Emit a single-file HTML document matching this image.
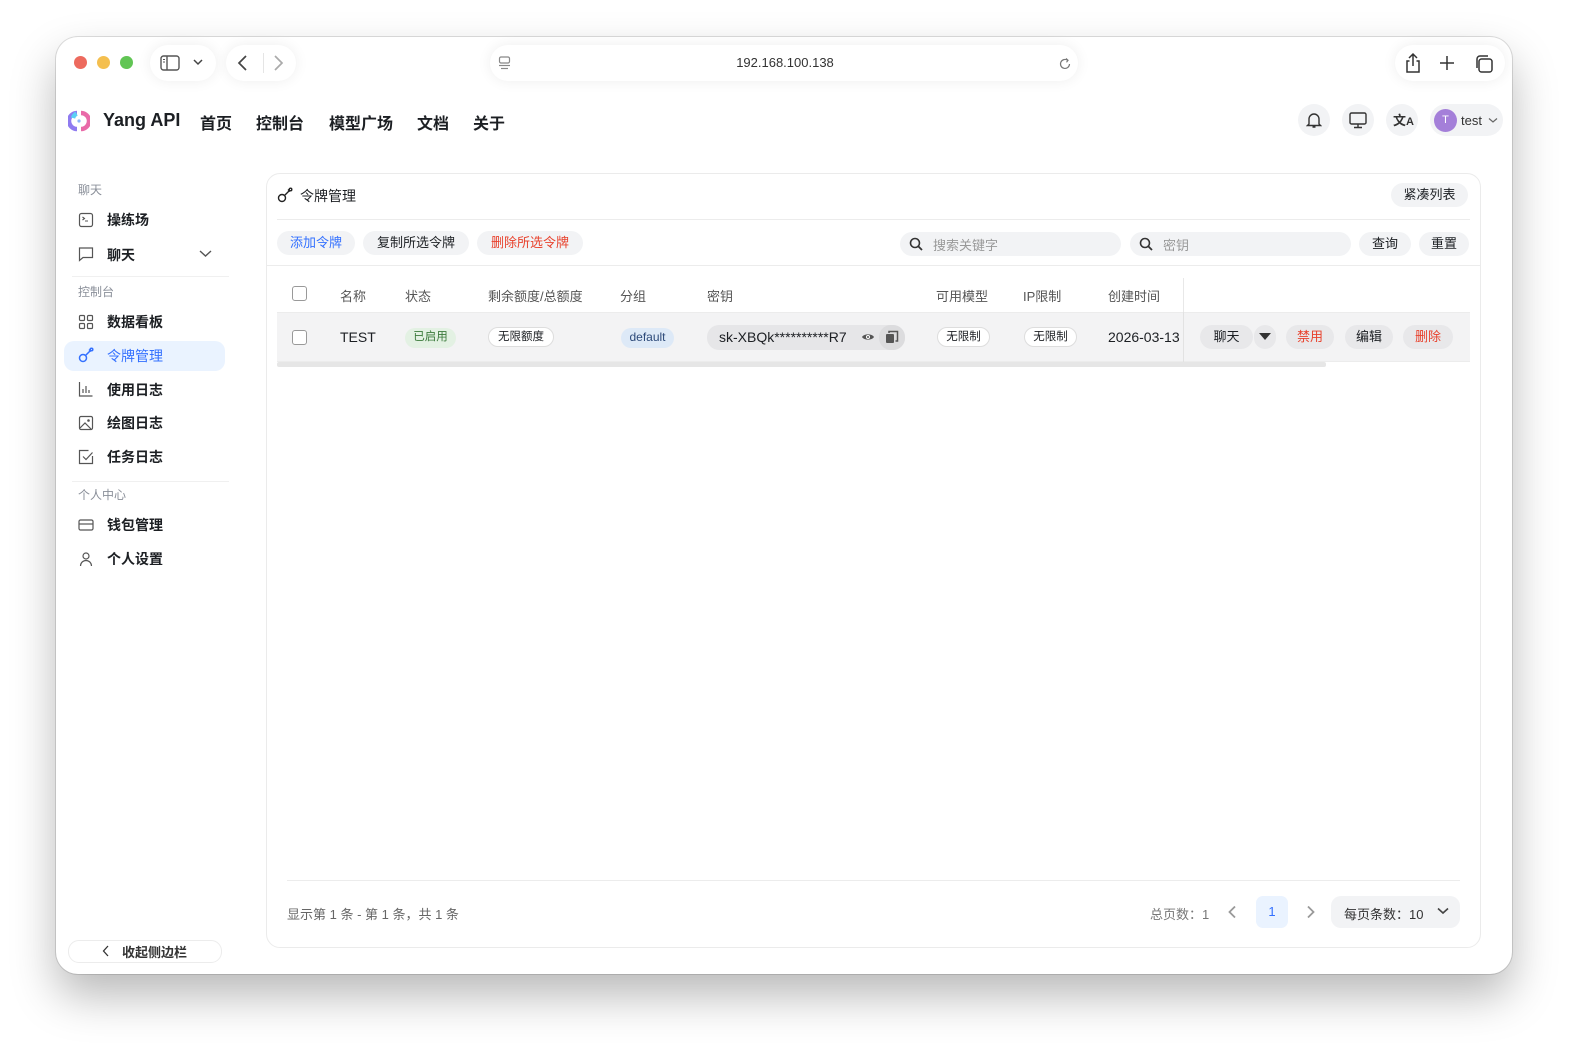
<!DOCTYPE html>
<html><head><meta charset="utf-8">
<style>
*{box-sizing:border-box;margin:0;padding:0}
body{width:1584px;height:1059px;background:#fff;position:relative;overflow:hidden;font-family:"Liberation Sans","Noto Sans CJK SC",sans-serif;color:#1c1f23}
.a{position:absolute}
.win{left:56px;top:37px;width:1456px;height:937px;border-radius:22px;background:#fff;box-shadow:0 22px 45px rgba(0,0,0,.28),0 0 0 1px rgba(0,0,0,.12)}
.dot{width:13px;height:13px;border-radius:50%;top:56px}
.pill{background:#fff;border-radius:18px;box-shadow:0 0 14px rgba(0,0,0,.07)}
.nav{font-size:16px;font-weight:bold;top:110px;color:#1c1f23}
.sl{font-size:12px;color:#8a8f99;left:78px}
.si{left:107px;font-size:14px;font-weight:bold;color:#1c1f23}
.ic{left:78px;width:16px;height:16px}
.btn{background:#f2f3f5;border-radius:12px;font-size:13px;height:24px;line-height:24px;text-align:center}
.th{top:286px;font-size:13px;color:#555}
.tag{border-radius:11px;font-size:11.5px;height:20px;line-height:19px;text-align:center}
.cb{width:15px;height:15px;border:1px solid #999;border-radius:3px;background:#fff}
</style></head><body>
<div class="a win"></div>
<div class="a dot" style="left:74px;background:#ed6a5e"></div>
<div class="a dot" style="left:97px;background:#f4bf4f"></div>
<div class="a dot" style="left:120px;background:#61c554"></div>
<div class="a pill" style="left:150px;top:45px;width:66px;height:36px"></div>
<svg class="a" style="left:160px;top:55px" width="20" height="16" viewBox="0 0 20 16"><rect x="1" y="1" width="18" height="14" rx="2.5" fill="none" stroke="#555" stroke-width="1.4"/><line x1="7" y1="1" x2="7" y2="15" stroke="#555" stroke-width="1.4"/><line x1="3" y1="4.5" x2="5" y2="4.5" stroke="#555"/><line x1="3" y1="7" x2="5" y2="7" stroke="#555"/></svg>
<svg class="a" style="left:193px;top:58px" width="10" height="8"><path d="M1 2l4 4 4-4" fill="none" stroke="#444" stroke-width="1.5"/></svg>
<div class="a pill" style="left:226px;top:45px;width:70px;height:36px"></div>
<svg class="a" style="left:236px;top:54px" width="14" height="18"><path d="M10 2L3 9l7 7" fill="none" stroke="#444" stroke-width="1.7"/></svg>
<div class="a" style="left:263px;top:53px;width:1px;height:20px;background:#e5e5e5"></div>
<svg class="a" style="left:271px;top:54px" width="14" height="18"><path d="M4 2l7 7-7 7" fill="none" stroke="#aaa" stroke-width="1.7"/></svg>
<div class="a pill" style="left:490px;top:45px;width:588px;height:36px"></div>
<svg class="a" style="left:498px;top:56px" width="14" height="14"><rect x="1.5" y="1" width="10" height="6" rx="1.5" fill="none" stroke="#888" stroke-width="1.2"/><line x1="1" y1="9.5" x2="12" y2="9.5" stroke="#888" stroke-width="1.2"/><line x1="3" y1="12.5" x2="10" y2="12.5" stroke="#888" stroke-width="1.2"/></svg>
<div class="a" style="left:690px;top:55px;width:190px;text-align:center;font-size:13px;color:#333">192.168.100.138</div>
<svg class="a" style="left:1058px;top:56px" width="14" height="15"><path d="M11.5 8a4.5 4.5 0 1 1-2-3.8" fill="none" stroke="#777" stroke-width="1.2"/><path d="M8 2.5l2 1.8-1.5 2" fill="none" stroke="#777" stroke-width="1.2"/></svg>
<div class="a pill" style="left:1395px;top:45px;width:110px;height:36px"></div>
<svg class="a" style="left:1403px;top:52px" width="20" height="22"><path d="M10 14V2M6 6l4-4 4 4M6.5 9H4v11h12V9h-2.5" fill="none" stroke="#333" stroke-width="1.5"/></svg>
<svg class="a" style="left:1439px;top:55px" width="16" height="16"><path d="M8 1v14M1 8h14" stroke="#333" stroke-width="1.5"/></svg>
<svg class="a" style="left:1474px;top:54px" width="20" height="20"><rect x="5" y="5" width="13" height="13" rx="2.5" fill="none" stroke="#333" stroke-width="1.5"/><path d="M3 14V5a3 3 0 0 1 3-3h8" fill="none" stroke="#333" stroke-width="1.5"/></svg>
<svg class="a" style="left:68px;top:110px" width="22" height="22" viewBox="0 0 22 22">
<path d="M9 3A8 8 0 0 0 9 19" fill="none" stroke="#8f7bf0" stroke-width="4.5"/>
<path d="M8.5 3.5A8 8 0 0 0 5 8" fill="none" stroke="#5ad0f5" stroke-width="4.5"/>
<path d="M13 3A8 8 0 0 1 13 19" fill="none" stroke="#e96aa8" stroke-width="4.5"/>
<circle cx="11" cy="11" r="1.6" fill="#8ab4f8"/></svg>
<div class="a" style="left:103px;top:110px;font-size:18px;font-weight:bold;color:#1c1f23">Yang API</div>
<div class="a nav" style="left:200px">首页</div>
<div class="a nav" style="left:256px">控制台</div>
<div class="a nav" style="left:329px">模型广场</div>
<div class="a nav" style="left:417px">文档</div>
<div class="a nav" style="left:473px">关于</div>
<div class="a" style="left:1298px;top:104px;width:32px;height:32px;border-radius:50%;background:#f2f3f5"></div>
<svg class="a" style="left:1306px;top:111px" width="16" height="18"><path d="M3 13V8a5 5 0 0 1 10 0v5l1.5 1.5h-13zM6.5 16h3" fill="none" stroke="#333" stroke-width="1.4"/></svg>
<div class="a" style="left:1342px;top:104px;width:32px;height:32px;border-radius:50%;background:#f2f3f5"></div>
<svg class="a" style="left:1349px;top:112px" width="18" height="17"><rect x="1" y="1" width="16" height="11" rx="1.5" fill="none" stroke="#333" stroke-width="1.4"/><path d="M9 12v3M5 15.5h8" stroke="#333" stroke-width="1.4"/></svg>
<div class="a" style="left:1386px;top:104px;width:32px;height:32px;border-radius:50%;background:#f2f3f5"></div>
<div class="a" style="left:1393px;top:110px;font-size:13px;font-weight:bold;color:#333">文<span style="font-size:11px">A</span></div>
<div class="a" style="left:1430px;top:104px;width:73px;height:32px;border-radius:16px;background:#f2f3f5"></div>
<div class="a" style="left:1434px;top:109px;width:23px;height:23px;border-radius:50%;background:#a47fd9;color:#fff;font-size:11px;text-align:center;line-height:23px">T</div>
<div class="a" style="left:1461px;top:113px;font-size:13px;color:#333">test</div>
<svg class="a" style="left:1488px;top:117px" width="10" height="7"><path d="M1 1.5l4 3.5 4-3.5" fill="none" stroke="#666" stroke-width="1.2"/></svg>
<div class="a sl" style="top:181px">聊天</div>
<svg class="a ic" style="top:212px" viewBox="0 0 16 16"><rect x="1.5" y="1.5" width="13" height="13" rx="2" fill="none" stroke="#555" stroke-width="1.2"/><path d="M4.5 5l2 1.5-2 1.5M7 9h3" fill="none" stroke="#555" stroke-width="1.1"/></svg>
<div class="a si" style="top:210px">操练场</div>
<svg class="a ic" style="top:246px" viewBox="0 0 16 16"><path d="M1.5 2h13v9.5H5l-3.5 3z" fill="none" stroke="#555" stroke-width="1.2"/></svg>
<div class="a si" style="top:245px">聊天</div>
<svg class="a" style="left:199px;top:250px" width="13" height="8"><path d="M1 1l5.5 5 5.5-5" fill="none" stroke="#555" stroke-width="1.4"/></svg>
<div class="a" style="left:72px;top:276px;width:157px;height:1px;background:#f0f0f0"></div>
<div class="a sl" style="top:283px">控制台</div>
<svg class="a ic" style="top:314px" viewBox="0 0 16 16"><g fill="none" stroke="#555" stroke-width="1.2"><rect x="1.5" y="1.5" width="5" height="5" rx="1"/><rect x="9.5" y="1.5" width="5" height="5" rx="1"/><rect x="1.5" y="9.5" width="5" height="5" rx="1"/><rect x="9.5" y="9.5" width="5" height="5" rx="1"/></g></svg>
<div class="a si" style="top:312px">数据看板</div>
<div class="a" style="left:64px;top:341px;width:161px;height:30px;border-radius:10px;background:#eaf3ff"></div>
<svg class="a ic" style="top:347px" viewBox="0 0 16 16"><g fill="none" stroke="#3370ff" stroke-width="1.5"><circle cx="5" cy="11" r="3.5"/><path d="M7.5 8.5l5-5M11 2.5l2 2"/><circle cx="13.5" cy="2.5" r="1.3"/></g></svg>
<div class="a si" style="top:346px;color:#3370ff;font-weight:normal">令牌管理</div>
<svg class="a ic" style="top:381px" viewBox="0 0 16 16"><path d="M1.5 1v14h13M5 12V8M8 12V5M11 12V9" fill="none" stroke="#555" stroke-width="1.2"/></svg>
<div class="a si" style="top:380px">使用日志</div>
<svg class="a ic" style="top:415px" viewBox="0 0 16 16"><rect x="1.5" y="1.5" width="13" height="13" rx="1.5" fill="none" stroke="#555" stroke-width="1.2"/><circle cx="10.5" cy="5.5" r="1.3" fill="#555"/><path d="M2 13l5-5 6 6" fill="none" stroke="#555" stroke-width="1.2"/></svg>
<div class="a si" style="top:413px">绘图日志</div>
<svg class="a ic" style="top:449px" viewBox="0 0 16 16"><path d="M14.5 7v7.5h-13v-13h9" fill="none" stroke="#555" stroke-width="1.2"/><path d="M5 7.5l3 3 6.5-7" fill="none" stroke="#555" stroke-width="1.2"/></svg>
<div class="a si" style="top:447px">任务日志</div>
<div class="a" style="left:72px;top:481px;width:157px;height:1px;background:#f0f0f0"></div>
<div class="a sl" style="top:486px">个人中心</div>
<svg class="a ic" style="top:517px" viewBox="0 0 16 16"><rect x="1" y="3" width="14" height="10" rx="1.5" fill="none" stroke="#555" stroke-width="1.2"/><line x1="1" y1="7" x2="15" y2="7" stroke="#555" stroke-width="1.2"/></svg>
<div class="a si" style="top:515px">钱包管理</div>
<svg class="a ic" style="top:551px" viewBox="0 0 16 16"><circle cx="8" cy="5" r="3" fill="none" stroke="#555" stroke-width="1.2"/><path d="M2.5 15a5.5 5.5 0 0 1 11 0" fill="none" stroke="#555" stroke-width="1.2"/></svg>
<div class="a si" style="top:549px">个人设置</div>
<div class="a" style="left:68px;top:940px;width:154px;height:23px;border:1px solid #ececec;border-radius:11px"></div>
<svg class="a" style="left:102px;top:945px" width="8" height="12"><path d="M6 1L1.5 6 6 11" fill="none" stroke="#333" stroke-width="1.3"/></svg>
<div class="a" style="left:122px;top:942px;font-size:13px;color:#333;font-weight:bold">收起侧边栏</div>
<div class="a" style="left:266px;top:173px;width:1215px;height:775px;border:1px solid #ebebeb;border-radius:14px;background:#fff"></div>
<svg class="a" style="left:277px;top:187px" width="16" height="16" viewBox="0 0 16 16"><g fill="none" stroke="#222" stroke-width="1.4"><circle cx="5" cy="11" r="3.5"/><path d="M7.5 8.5l5-5M11 2.5l2 2"/><circle cx="13.5" cy="2.5" r="1.3"/></g></svg>
<div class="a" style="left:300px;top:186px;font-size:14px">令牌管理</div>
<div class="a btn" style="left:1391px;top:183px;width:77px">紧凑列表</div>
<div class="a" style="left:277px;top:219px;width:1193px;height:1px;background:#ececec"></div>
<div class="a btn" style="left:277px;top:231px;width:78px;color:#3370ff">添加令牌</div>
<div class="a btn" style="left:363px;top:231px;width:106px">复制所选令牌</div>
<div class="a btn" style="left:477px;top:231px;width:106px;color:#e8412c">删除所选令牌</div>
<div class="a" style="left:900px;top:232px;width:221px;height:24px;border-radius:12px;background:#f2f3f5"></div>
<svg class="a" style="left:909px;top:237px" width="14" height="14"><circle cx="6" cy="6" r="4.5" fill="none" stroke="#333" stroke-width="1.6"/><path d="M9.5 9.5l3.5 3.5" stroke="#333" stroke-width="1.8"/></svg>
<div class="a" style="left:933px;top:235px;font-size:13px;color:#999">搜索关键字</div>
<div class="a" style="left:1130px;top:232px;width:221px;height:24px;border-radius:12px;background:#f2f3f5"></div>
<svg class="a" style="left:1139px;top:237px" width="14" height="14"><circle cx="6" cy="6" r="4.5" fill="none" stroke="#333" stroke-width="1.6"/><path d="M9.5 9.5l3.5 3.5" stroke="#333" stroke-width="1.8"/></svg>
<div class="a" style="left:1163px;top:235px;font-size:13px;color:#999">密钥</div>
<div class="a btn" style="left:1359px;top:232px;width:52px">查询</div>
<div class="a btn" style="left:1419px;top:232px;width:50px">重置</div>
<div class="a" style="left:267px;top:265px;width:1213px;height:1px;background:#ececec"></div>
<div class="a cb" style="left:292px;top:286px"></div>
<div class="a th" style="left:340px">名称</div>
<div class="a th" style="left:405px">状态</div>
<div class="a th" style="left:488px">剩余额度/总额度</div>
<div class="a th" style="left:620px">分组</div>
<div class="a th" style="left:707px">密钥</div>
<div class="a th" style="left:936px">可用模型</div>
<div class="a th" style="left:1023px">IP限制</div>
<div class="a th" style="left:1108px">创建时间</div>
<div class="a" style="left:1183px;top:278px;width:1px;height:84px;background:#e8e8e8"></div>
<div class="a" style="left:277px;top:312px;width:1193px;height:50px;background:#f3f3f4;border-top:1px solid #ececec;border-bottom:1px solid #ececec"></div>
<div class="a" style="left:277px;top:362px;width:1049px;height:5px;background:#e6e6e6;border-radius:2px"></div>
<div class="a cb" style="left:292px;top:330px"></div>
<div class="a" style="left:340px;top:329px;font-size:14px">TEST</div>
<div class="a tag" style="left:405px;top:328px;width:51px;background:#e3f1e3;color:#3b7a3b">已启用</div>
<div class="a tag" style="left:488px;top:327px;width:66px;background:#fff;border:1px solid #ddd">无限额度</div>
<div class="a tag" style="left:621px;top:328px;width:53px;background:#dde9f7;color:#2d4a7a;font-size:12px">default</div>
<div class="a" style="left:707px;top:325px;width:198px;height:25px;border-radius:12px;background:#e6e6e8"></div>
<div class="a" style="left:719px;top:329px;font-size:14px">sk-XBQk**********R7</div>
<svg class="a" style="left:861px;top:331px" width="14" height="12"><path d="M1 6c2-3.5 10-3.5 12 0-2 3.5-10 3.5-12 0z" fill="#555"/><circle cx="7" cy="6" r="2" fill="#fff"/><circle cx="7" cy="6" r="1" fill="#555"/></svg>
<div class="a" style="left:879px;top:325px;width:26px;height:25px;border-radius:12px;background:#dcdcde"></div>
<svg class="a" style="left:885px;top:330px" width="14" height="14"><rect x="1" y="4" width="8" height="9" rx="1" fill="#555"/><path d="M4 3V1.5h8.5V11H10.5" fill="none" stroke="#555" stroke-width="1.5"/></svg>
<div class="a tag" style="left:937px;top:327px;width:53px;background:#fff;border:1px solid #ddd">无限制</div>
<div class="a tag" style="left:1024px;top:327px;width:53px;background:#fff;border:1px solid #ddd">无限制</div>
<div class="a" style="left:1108px;top:329px;font-size:14px;width:75px;overflow:hidden;white-space:nowrap">2026-03-13</div>
<div class="a" style="left:1183px;top:312px;width:1px;height:50px;background:#e2e2e2"></div>
<div class="a btn" style="left:1200px;top:325px;width:53px;height:24px;background:#e8e8ea">聊天</div>
<div class="a btn" style="left:1254px;top:325px;width:22px;height:24px;background:#e8e8ea"></div>
<svg class="a" style="left:1259px;top:333px" width="12" height="8"><path d="M0 0h12L6 7z" fill="#333"/></svg>
<div class="a btn" style="left:1286px;top:325px;width:48px;height:24px;background:#e8e8ea;color:#e8412c">禁用</div>
<div class="a btn" style="left:1345px;top:325px;width:48px;height:24px;background:#e8e8ea">编辑</div>
<div class="a btn" style="left:1403px;top:325px;width:50px;height:24px;background:#e8e8ea;color:#e8412c">删除</div>
<div class="a" style="left:287px;top:880px;width:1173px;height:1px;background:#ececec"></div>
<div class="a" style="left:287px;top:904px;font-size:13px;color:#666">显示第 1 条 - 第 1 条，共 1 条</div>
<div class="a" style="left:1150px;top:904px;font-size:13px;color:#777">总页数：1</div>
<svg class="a" style="left:1227px;top:905px" width="10" height="14"><path d="M8 1.5L2.5 7 8 12.5" fill="none" stroke="#999" stroke-width="1.8"/></svg>
<div class="a" style="left:1256px;top:896px;width:32px;height:32px;border-radius:7px;background:#eaf3ff;color:#3370ff;font-size:13px;text-align:center;line-height:32px">1</div>
<svg class="a" style="left:1306px;top:905px" width="10" height="14"><path d="M2 1.5L7.5 7 2 12.5" fill="none" stroke="#999" stroke-width="1.8"/></svg>
<div class="a" style="left:1331px;top:896px;width:129px;height:32px;border-radius:10px;background:#f2f3f5"></div>
<div class="a" style="left:1344px;top:904px;font-size:13px;color:#333">每页条数：10</div>
<svg class="a" style="left:1437px;top:907px" width="12" height="8"><path d="M1 1.5l5 4.5 5-4.5" fill="none" stroke="#444" stroke-width="1.6"/></svg>
</body></html>
